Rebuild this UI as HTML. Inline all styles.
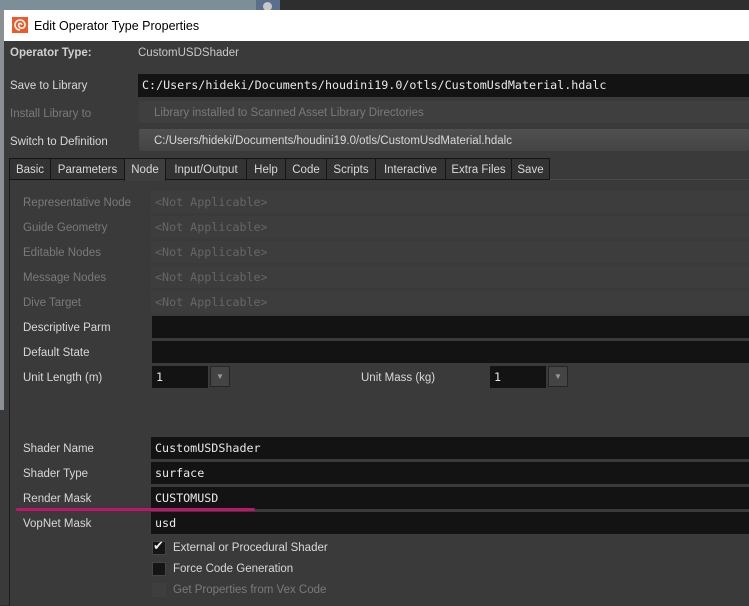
<!DOCTYPE html>
<html><head><style>
body{margin:0;width:749px;height:605px;overflow:hidden;background:#2e2e2e;font-family:"Liberation Sans",sans-serif;position:relative}
.a{position:absolute}
.l{position:absolute;font-size:11.5px;color:#d8d8d8;white-space:nowrap;margin-top:1px}
.dim{color:#7a7a7a}
.f{position:absolute;background:#131313;box-sizing:border-box;font-family:"DejaVu Sans Mono","Liberation Mono",monospace;font-size:11.7px;color:#e8e8e8;padding-left:4px;line-height:23px;white-space:nowrap;overflow:hidden}
.fd{background:#3d3d3d;color:#666}
.tab{position:absolute;top:158px;height:22px;line-height:23px;font-size:11.5px;color:#d8d8d8;background:#333;border:1px solid #151515;box-sizing:border-box;text-align:center}
.cb{position:absolute;left:152px;width:14px;height:14px;background:#151515;border:1px solid #444;box-sizing:border-box}
</style></head><body>
<div class="a" style="left:0;top:0;width:256px;height:10px;background:#7e8e98"></div>
<div class="a" style="left:256px;top:0;width:24px;height:10px;background:#5a6f8e"></div>
<div class="a" style="left:263px;top:2px;width:9px;height:9px;border-radius:50%;background:#c8c8c8"></div>
<div class="a" style="left:0;top:10px;width:4px;height:400px;background:#8a9096"></div>
<div class="a" style="left:0;top:410px;width:4px;height:195px;background:#3a3a3a"></div>
<div class="a" style="left:4px;top:10px;width:745px;height:595px;background:#3a3a3a"></div>
<div class="a" style="left:4px;top:10px;width:745px;height:31px;background:#fff"></div>
<svg class="a" style="left:12px;top:17px" width="16" height="16" viewBox="0 0 16 16"><rect width="16" height="16" fill="#f05a28"/><path d="M8 13a5 5 0 1 1 5-5 3.2 3.2 0 1 1-6.4 0 1.6 1.6 0 1 1 3.2 0" fill="none" stroke="#fff" stroke-width="1.6"/></svg>
<div class="l" style="left:34px;top:18px;font-size:12.5px;color:#000">Edit Operator Type Properties</div>
<div class="l" style="left:10px;top:46px;font-weight:bold;color:#d0d0d0">Operator Type:</div>
<div class="l" style="left:138px;top:46px;color:#c8c8c8">CustomUSDShader</div>
<div class="l" style="left:10px;top:79px">Save to Library</div>
<div class="f" style="left:138px;top:74px;width:611px;height:23px">C:/Users/hideki/Documents/houdini19.0/otls/CustomUsdMaterial.hdalc</div>
<div class="l dim" style="left:10px;top:107px">Install Library to</div>
<div class="a" style="left:139px;top:101px;width:610px;height:22px;background:#3f3f3f"></div>
<div class="l dim" style="left:154px;top:106px">Library installed to Scanned Asset Library Directories</div>
<div class="l" style="left:10px;top:135px">Switch to Definition</div>
<div class="a" style="left:139px;top:129px;width:610px;height:22px;background:linear-gradient(#505050,#444);border-radius:2px"></div>
<div class="l" style="left:154px;top:134px">C:/Users/hideki/Documents/houdini19.0/otls/CustomUsdMaterial.hdalc</div>
<div class="a" style="left:9px;top:179px;width:740px;height:426px;background:#3a3a3a;border-left:1px solid #1e1e1e;border-top:1px solid #4a4a4a"></div>
<div class="tab" style="left:9px;width:42px">Basic</div>
<div class="tab" style="left:50px;width:75px">Parameters</div>
<div class="tab" style="left:124px;width:42px;background:#3e3e3e;border-bottom:none;height:23px">Node</div>
<div class="tab" style="left:165px;width:82px">Input/Output</div>
<div class="tab" style="left:246px;width:40px">Help</div>
<div class="tab" style="left:285px;width:42px">Code</div>
<div class="tab" style="left:326px;width:50px">Scripts</div>
<div class="tab" style="left:375px;width:71px">Interactive</div>
<div class="tab" style="left:445px;width:67px">Extra Files</div>
<div class="tab" style="left:511px;width:39px">Save</div>

<div class="l dim" style="left:23px;top:196px">Representative Node</div>
<div class="f fd" style="left:151px;top:191px;width:598px;height:22px">&lt;Not Applicable&gt;</div>
<div class="l dim" style="left:23px;top:221px">Guide Geometry</div>
<div class="f fd" style="left:151px;top:216px;width:598px;height:22px">&lt;Not Applicable&gt;</div>
<div class="l dim" style="left:23px;top:246px">Editable Nodes</div>
<div class="f fd" style="left:151px;top:241px;width:598px;height:22px">&lt;Not Applicable&gt;</div>
<div class="l dim" style="left:23px;top:271px">Message Nodes</div>
<div class="f fd" style="left:151px;top:266px;width:598px;height:22px">&lt;Not Applicable&gt;</div>
<div class="l dim" style="left:23px;top:296px">Dive Target</div>
<div class="f fd" style="left:151px;top:291px;width:598px;height:22px">&lt;Not Applicable&gt;</div>
<div class="l" style="left:23px;top:321px">Descriptive Parm</div>
<div class="f" style="left:152px;top:316px;width:597px;height:22px"></div>
<div class="l" style="left:23px;top:346px">Default State</div>
<div class="f" style="left:152px;top:341px;width:597px;height:22px"></div>
<div class="l" style="left:23px;top:371px">Unit Length (m)</div>
<div class="f" style="left:152px;top:366px;width:56px;height:22px">1</div>
<div class="a" style="left:210px;top:366px;width:20px;height:21px;background:#444;border:1px solid #262626;box-sizing:border-box;color:#999;font-size:8px;text-align:center;line-height:19px">▼</div>
<div class="l" style="left:361px;top:371px">Unit Mass (kg)</div>
<div class="f" style="left:490px;top:366px;width:56px;height:22px">1</div>
<div class="a" style="left:548px;top:366px;width:20px;height:21px;background:#444;border:1px solid #262626;box-sizing:border-box;color:#999;font-size:8px;text-align:center;line-height:19px">▼</div>

<div class="l" style="left:23px;top:442px">Shader Name</div>
<div class="f" style="left:151px;top:437px;width:598px;height:22px">CustomUSDShader</div>
<div class="l" style="left:23px;top:467px">Shader Type</div>
<div class="f" style="left:151px;top:462px;width:598px;height:22px">surface</div>
<div class="l" style="left:23px;top:492px">Render Mask</div>
<div class="f" style="left:151px;top:487px;width:598px;height:22px">CUSTOMUSD</div>
<div class="a" style="left:16px;top:508px;width:239px;height:3px;border-radius:2px;background:#c0156c"></div>
<div class="l" style="left:23px;top:517px">VopNet Mask</div>
<div class="f" style="left:151px;top:512px;width:598px;height:22px">usd</div>
<div class="cb" style="top:541px"></div>
<div class="a" style="left:153px;top:538px;font-size:13px;color:#eee">✔</div>
<div class="l" style="left:173px;top:541px">External or Procedural Shader</div>
<div class="cb" style="top:562px"></div>
<div class="l" style="left:173px;top:562px">Force Code Generation</div>
<div class="cb" style="top:583px;background:#3e3e3e;border-color:#3e3e3e"></div>
<div class="l dim" style="left:173px;top:583px">Get Properties from Vex Code</div>
</body></html>
